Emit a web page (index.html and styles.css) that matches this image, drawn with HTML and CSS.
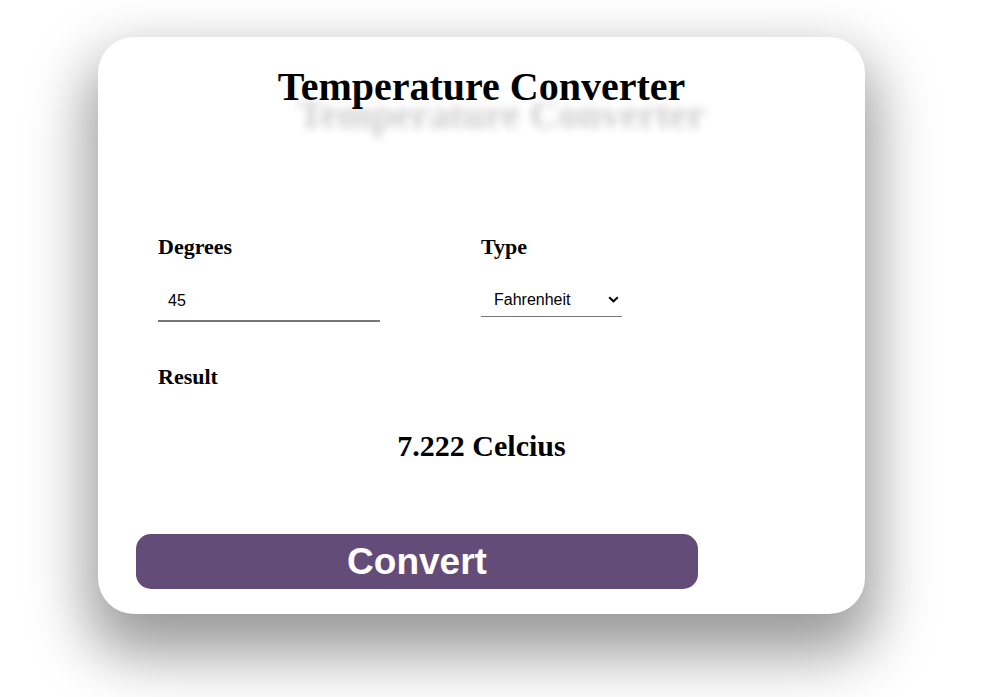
FILE: index.html
```html
<!DOCTYPE html>
<html lang="en">
<head>
<meta charset="utf-8">
<title>Temperature Converter</title>
<link rel="stylesheet" href="styles.css">
</head>
<body>
  <main class="card">
    <h1 class="title">Temperature Converter</h1>
    <div class="fields">
      <div class="field">
        <label class="label" for="deg">Degrees</label>
        <input class="input" id="deg" type="text" value="45">
      </div>
      <div class="field">
        <label class="label" for="type">Type</label>
        <div class="select-wrap">
          <select class="select" id="type">
            <option>Fahrenheit</option>
            <option>Celcius</option>
          </select>
          <svg class="chevron" width="11" height="7" viewBox="0 0 11 7"><path d="M1.2 1.2 L5.5 5.3 L9.8 1.2" fill="none" stroke="#000" stroke-width="2"/></svg>
        </div>
      </div>
    </div>
    <div class="label result-label">Result</div>
    <div class="result">7.222 Celcius</div>
    <button class="convert" type="button">Convert</button>
  </main>
</body>
</html>
```
FILE: styles.css
```css
html, body {
  margin: 0;
  padding: 0;
  background: #fff;
}
body {
  font-family: "Liberation Serif", "Times New Roman", serif;
  color: #000;
  padding: 37px 0 0 98px;
  height: 697px;
  box-sizing: border-box;
  overflow: hidden;
}
.card {
  width: 767px;
  height: 577px;
  box-sizing: border-box;
  background: #fff;
  border-radius: 36px;
  box-shadow: 0 30px 60px 10px rgba(0, 0, 0, 0.4);
  padding-top: 27px;
  display: flex;
  flex-direction: column;
}
.title {
  margin: 0;
  font-size: 40px;
  line-height: 46px;
  font-weight: bold;
  text-align: center;
  text-shadow: 20px 28px 8px rgba(0, 0, 0, 0.2);
}
.fields {
  display: flex;
  margin-top: 124px;
  padding-left: 60px;
  gap: 101px;
  align-items: flex-start;
}
.field {
  display: flex;
  flex-direction: column;
  gap: 22px;
}
.label {
  font-size: 22px;
  line-height: 26px;
  font-weight: bold;
}
.input {
  width: 222px;
  height: 40px;
  box-sizing: border-box;
  border: none;
  border-bottom: 2px solid #767676;
  padding: 0 10px;
  margin: 0;
  font-family: "Liberation Sans", Arial, sans-serif;
  font-size: 16px;
  color: #000;
  outline: none;
  background: transparent;
}
.select-wrap {
  position: relative;
  width: 141px;
}
.select {
  -webkit-appearance: none;
  appearance: none;
  width: 141px;
  height: 35px;
  box-sizing: border-box;
  border: none;
  border-bottom: 1px solid #767676;
  border-radius: 0;
  padding: 0 0 0 13px;
  margin: 0;
  font-family: "Liberation Sans", Arial, sans-serif;
  font-size: 16px;
  color: #000;
  background: transparent;
  outline: none;
}
.chevron {
  position: absolute;
  left: 127px;
  top: 14px;
  pointer-events: none;
}
.result-label {
  margin-top: 42px;
  padding-left: 60px;
}
.result {
  margin-top: 38px;
  font-size: 30px;
  line-height: 36px;
  font-weight: bold;
  text-align: center;
}
.convert {
  margin: 70px 0 0 38px;
  width: 562px;
  height: 55px;
  border: none;
  border-radius: 15px;
  background: #644c79;
  color: #fff;
  font-family: "Liberation Sans", Arial, sans-serif;
  font-size: 37px;
  font-weight: bold;
  padding: 0;
  display: flex;
  align-items: center;
  justify-content: center;
  cursor: pointer;
}
```
